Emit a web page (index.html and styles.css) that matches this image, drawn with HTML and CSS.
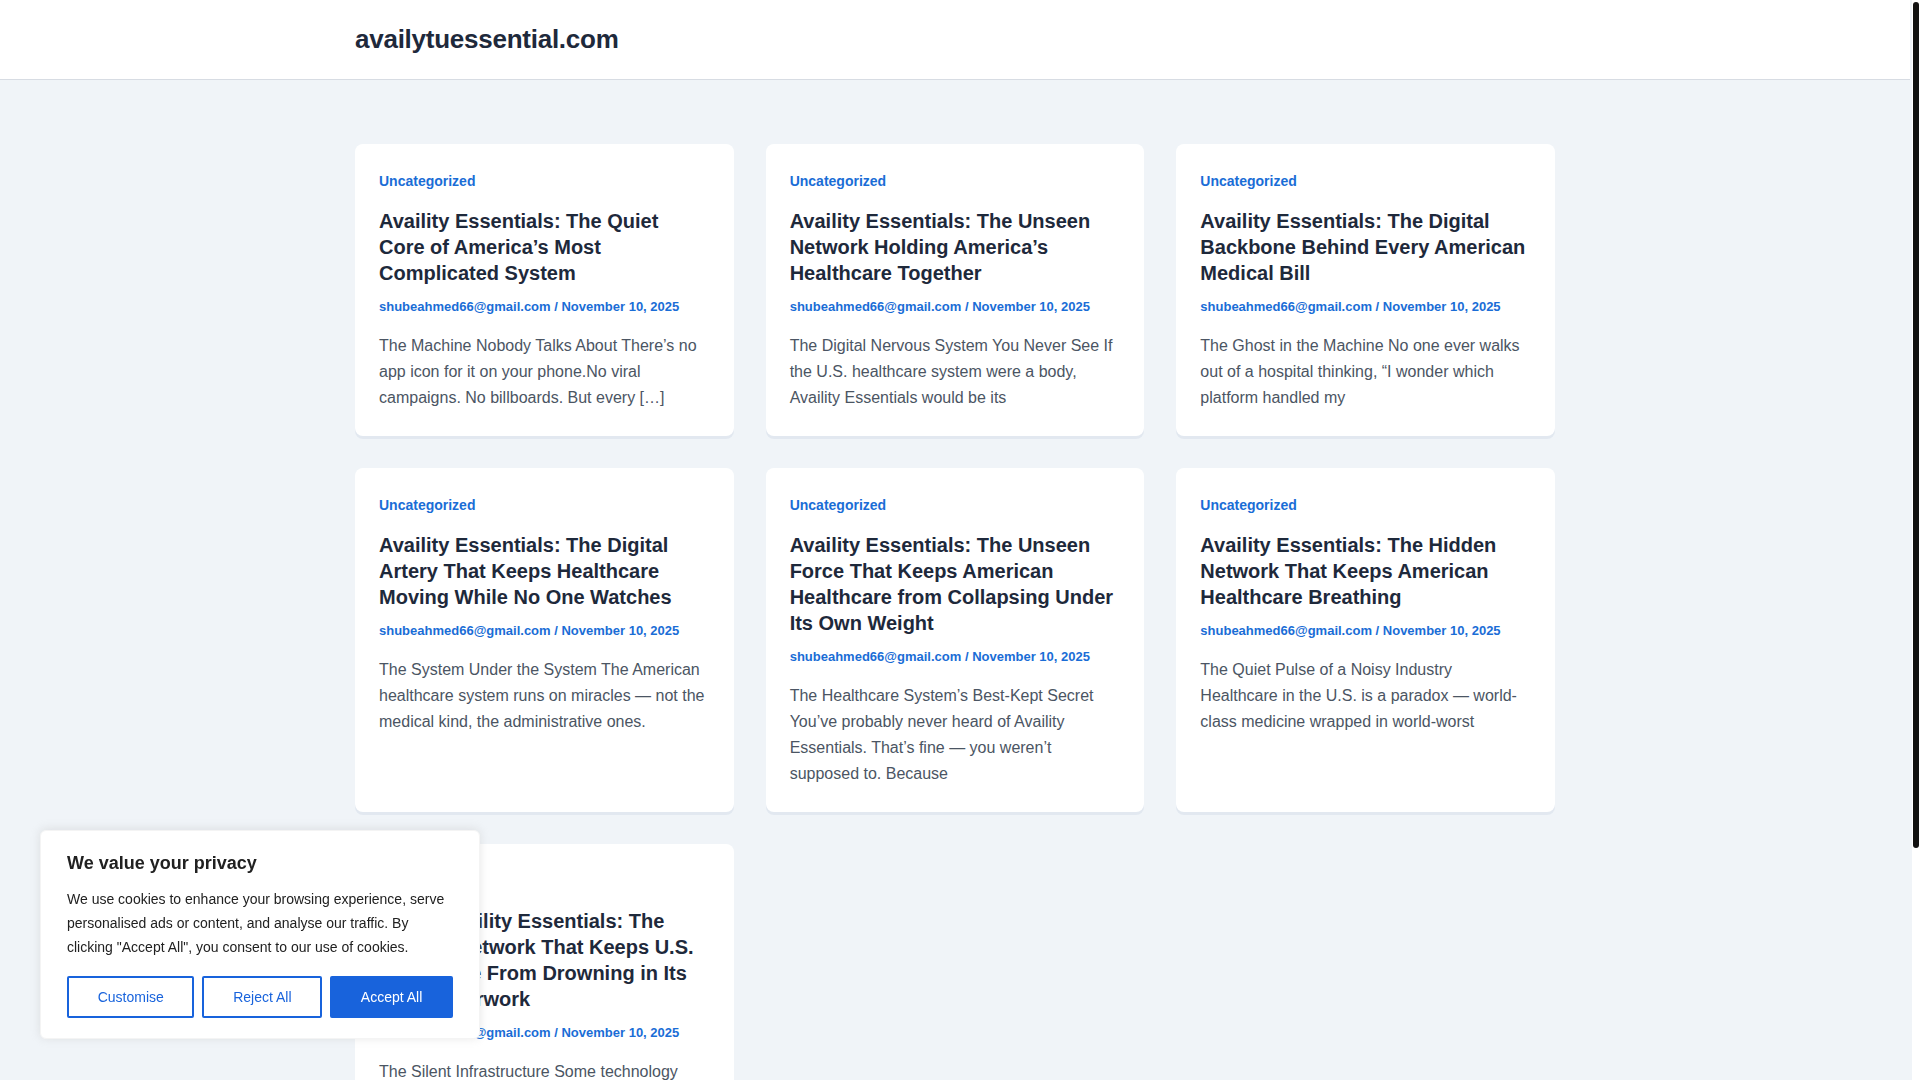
FILE: index.html
```html
<!DOCTYPE html>
<html lang="en">
<head>
<meta charset="utf-8">
<title>availytuessential.com</title>
<link rel="stylesheet" href="styles.css">
</head>
<body>
<header class="site-header">
  <div class="container header-inner">
    <a class="site-title" href="#">availytuessential.com</a>
  </div>
</header>

<main class="site-main">
  <div class="container posts">
    <article class="card">
      <a class="cat" href="#">Uncategorized</a>
      <h2 class="title">Availity Essentials: The Quiet Core of America’s Most Complicated System</h2>
      <div class="meta"><a href="#">shubeahmed66@gmail.com</a> / <a href="#">November 10, 2025</a></div>
      <p class="excerpt">The Machine Nobody Talks About There’s no app icon for it on your phone.No viral campaigns. No billboards. But every […]</p>
    </article>
    <article class="card">
      <a class="cat" href="#">Uncategorized</a>
      <h2 class="title">Availity Essentials: The Unseen Network Holding America’s Healthcare Together</h2>
      <div class="meta"><a href="#">shubeahmed66@gmail.com</a> / <a href="#">November 10, 2025</a></div>
      <p class="excerpt">The Digital Nervous System You Never See If the U.S. healthcare system were a body, Availity Essentials would be its</p>
    </article>
    <article class="card">
      <a class="cat" href="#">Uncategorized</a>
      <h2 class="title">Availity Essentials: The Digital Backbone Behind Every American Medical Bill</h2>
      <div class="meta"><a href="#">shubeahmed66@gmail.com</a> / <a href="#">November 10, 2025</a></div>
      <p class="excerpt">The Ghost in the Machine No one ever walks out of a hospital thinking, “I wonder which platform handled my</p>
    </article>
    <article class="card">
      <a class="cat" href="#">Uncategorized</a>
      <h2 class="title">Availity Essentials: The Digital Artery That Keeps Healthcare Moving While No One Watches</h2>
      <div class="meta"><a href="#">shubeahmed66@gmail.com</a> / <a href="#">November 10, 2025</a></div>
      <p class="excerpt">The System Under the System The American healthcare system runs on miracles — not the medical kind, the administrative ones.</p>
    </article>
    <article class="card">
      <a class="cat" href="#">Uncategorized</a>
      <h2 class="title">Availity Essentials: The Unseen Force That Keeps American Healthcare from Collapsing Under Its Own Weight</h2>
      <div class="meta"><a href="#">shubeahmed66@gmail.com</a> / <a href="#">November 10, 2025</a></div>
      <p class="excerpt">The Healthcare System’s Best-Kept Secret You’ve probably never heard of Availity Essentials. That’s fine — you weren’t supposed to. Because</p>
    </article>
    <article class="card">
      <a class="cat" href="#">Uncategorized</a>
      <h2 class="title">Availity Essentials: The Hidden Network That Keeps American Healthcare Breathing</h2>
      <div class="meta"><a href="#">shubeahmed66@gmail.com</a> / <a href="#">November 10, 2025</a></div>
      <p class="excerpt">The Quiet Pulse of a Noisy Industry Healthcare in the U.S. is a paradox — world-class medicine wrapped in world-worst</p>
    </article>
    <article class="card">
      <a class="cat" href="#">Uncategorized</a>
      <h2 class="title">Inside Availity Essentials: The Unseen Network That Keeps U.S. Healthcare From Drowning in Its Own Paperwork</h2>
      <div class="meta"><a href="#">shubeahmed66@gmail.com</a> / <a href="#">November 10, 2025</a></div>
      <p class="excerpt">The Silent Infrastructure Some technology demands your attention. This one never asks for it, and that is</p>
    </article>
  </div>
</main>

<div class="scrollbar"><div class="scrollbar-thumb"></div></div>

<div class="cookie-banner">
  <p class="cookie-title">We value your privacy</p>
  <p class="cookie-text">We use cookies to enhance your browsing experience, serve personalised ads or content, and analyse our traffic. By clicking "Accept All", you consent to our use of cookies.</p>
  <div class="cookie-buttons">
    <button class="btn btn-outline">Customise</button>
    <button class="btn btn-outline">Reject All</button>
    <button class="btn btn-fill">Accept All</button>
  </div>
</div>
</body>
</html>
```

FILE: styles.css
```css
html {
  background: #f0f4f8;
  scrollbar-width: none;
}
html::-webkit-scrollbar {
  width: 0;
  height: 0;
}
body {
  margin: 0;
  padding-right: 10px;
  font-family: "Liberation Sans", Arial, sans-serif;
  background: #f0f4f8;
  color: #1e293b;
}
a {
  text-decoration: none;
  color: inherit;
}
.container {
  width: 1200px;
  margin: 0 auto;
}
.site-header {
  background: #ffffff;
  border-bottom: 1px solid #d7dce3;
}
.header-inner {
  height: 79px;
  display: flex;
  align-items: center;
}
.site-title {
  font-size: 26px;
  font-weight: 700;
  letter-spacing: -0.25px;
  color: #1e293b;
  line-height: 1;
  margin-top: -2px;
}
.site-main {
  padding: 64px 0 212px;
}
.posts {
  display: grid;
  grid-template-columns: repeat(3, 1fr);
  gap: 32px;
  align-items: stretch;
}
.card {
  background: #ffffff;
  border-radius: 8px;
  box-shadow: 0 3px 0 #e2e8f0;
  padding: 25px 26px 25px 24px;
  display: flex;
  flex-direction: column;
}
.cat {
  font-size: 14px;
  font-weight: 700;
  line-height: 24px;
  color: #1a6dd6;
  align-self: flex-start;
}
.title {
  margin: 15px 0 0;
  font-size: 20px;
  font-weight: 700;
  line-height: 26px;
  color: #1e293b;
}
.meta {
  margin-top: 11px;
  font-size: 13px;
  font-weight: 700;
  line-height: 20px;
  color: #1a6dd6;
}
.excerpt {
  margin: 16px 0 0;
  font-size: 16px;
  line-height: 26px;
  color: #4b5563;
}
.scrollbar {
  position: fixed;
  top: 0;
  right: 0;
  bottom: 0;
  width: 8px;
  background: #ffffff;
}
.scrollbar-thumb {
  margin: 2px 1px 0 1px;
  height: 846px;
  background: #111111;
  border-radius: 3px;
}
.cookie-banner {
  position: fixed;
  left: 40px;
  bottom: 41px;
  width: 440px;
  box-sizing: border-box;
  padding: 20px 26px 20px;
  background: #ffffff;
  border: 1px solid #f4f4f4;
  border-radius: 6px;
  box-shadow: 0 -1px 10px 0 rgba(172, 171, 171, 0.3);
  color: #212121;
}
.cookie-title {
  margin: 0 0 12px;
  font-size: 18px;
  font-weight: 700;
  line-height: 24px;
}
.cookie-text {
  margin: 0;
  font-size: 14px;
  line-height: 24px;
}
.cookie-buttons {
  display: flex;
  gap: 8px;
  margin-top: 17px;
}
.btn {
  flex: auto;
  font-family: "Liberation Sans", Arial, sans-serif;
  font-size: 14px;
  font-weight: 500;
  line-height: 22px;
  padding: 8px 20px;
  border: 2px solid #1863dc;
  border-radius: 2px;
  cursor: pointer;
}
.btn-outline {
  background: transparent;
  color: #1863dc;
}
.btn-fill {
  background: #1863dc;
  color: #ffffff;
}
```
